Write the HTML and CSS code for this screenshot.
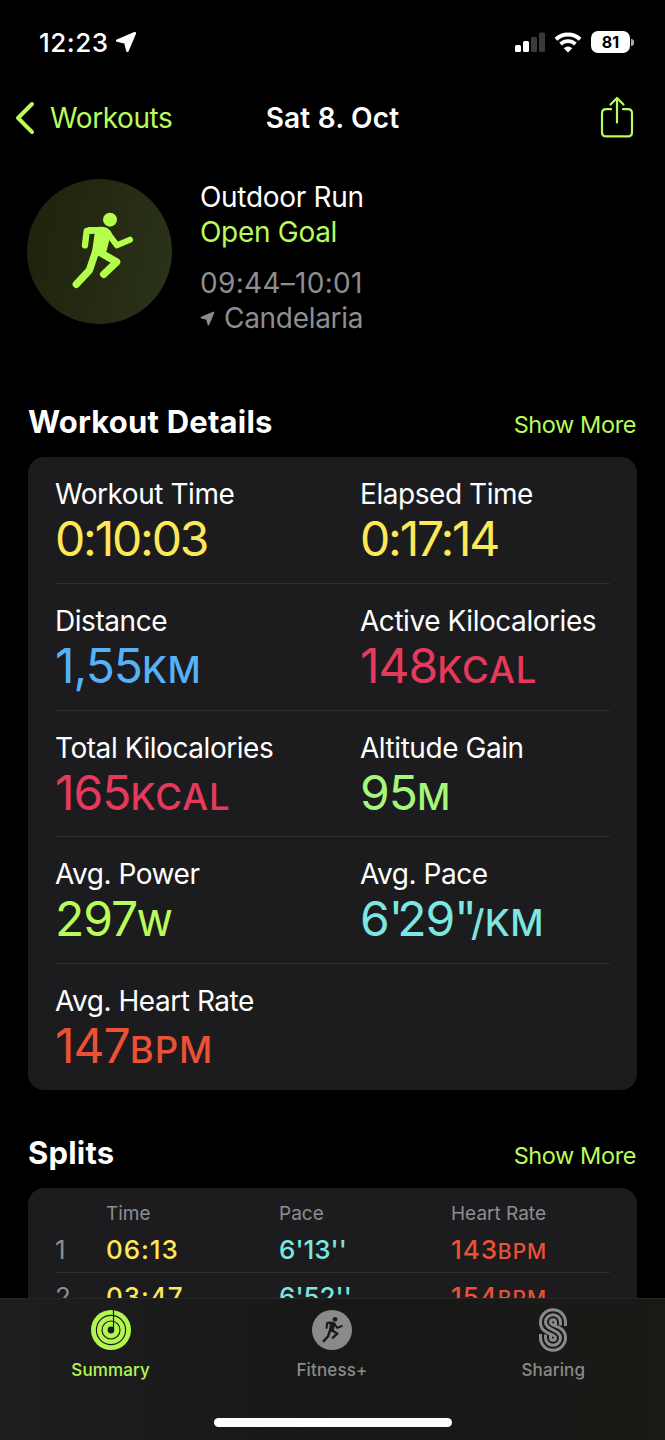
FILE: index.html
```html
<!DOCTYPE html>
<html lang="en">
<head>
    <meta charset="UTF-8">
    <meta name="viewport" content="width=device-width, initial-scale=1.0">
    <title>Workout - Sat 8. Oct</title>
    <link rel="stylesheet" href="styles.css">
</head>
<body>
    <!-- Shared shapes -->
    <svg class="defs" width="0" height="0">
        <symbol id="runner" viewBox="210 150 195 240">
            <circle cx="330" cy="179" r="21" fill="currentColor"/>
            <g fill="none" stroke="currentColor" stroke-linecap="round" stroke-linejoin="round">
                <path d="M255 256L260 213L305 210" stroke-width="19"/>
                <path d="M322 218L351 256L390 239" stroke-width="18"/>
                <path d="M288 272L268 331L229 373" stroke-width="22"/>
                <path d="M298 276L350 306L311 343" stroke-width="22"/>
            </g>
            <path d="M262 201H312Q328 203 336 221L328 240L320 272L312 286L280 290L276 277L284 220Z" fill="currentColor"/>
        </symbol>
        <symbol id="arrow" viewBox="0 0 22 22">
            <path d="M19.8 2.2L2.2 9.6L10.4 11.4L12.4 19.8Z" fill="currentColor" stroke="currentColor" stroke-width="2.6" stroke-linejoin="round"/>
        </symbol>
    </svg>

    <header class="status-bar">
        <div class="status-time">
            <span class="clock">12:23</span>
            <svg class="status-arrow"><use href="#arrow"/></svg>
        </div>
        <div class="status-icons">
            <svg class="signal" viewBox="0 0 30 20">
                <rect x="0" y="13" width="6" height="7" rx="1.5" fill="#fff"/>
                <rect x="8" y="9" width="6" height="11" rx="1.5" fill="#fff"/>
                <rect x="16" y="5" width="6" height="15" rx="1.5" fill="#3a3a3a"/>
                <rect x="24" y="0.5" width="6" height="19.5" rx="1.5" fill="#3a3a3a"/>
            </svg>
            <svg class="wifi" viewBox="0 0 28 21">
                <path d="M1.9 7.2A17.6 17.6 0 0 1 26.1 7.2" fill="none" stroke="#fff" stroke-width="4"/>
                <path d="M6.6 12A11 11 0 0 1 21.4 12" fill="none" stroke="#fff" stroke-width="3.8"/>
                <path d="M14 20.5L9.8 16.2A6.2 6.2 0 0 1 18.2 16.2Z" fill="#fff"/>
            </svg>
            <div class="battery">81</div>
        </div>
    </header>

    <nav class="nav-bar">
        <a class="back" href="#">
            <svg class="chevron" viewBox="0 0 20 34">
                <path d="M17 3L3 17L17 31" fill="none" stroke="currentColor" stroke-width="4" stroke-linecap="round" stroke-linejoin="round"/>
            </svg>
            <span>Workouts</span>
        </a>
        <h1>Sat 8. Oct</h1>
        <svg class="share" viewBox="0 0 34 42">
            <g fill="none" stroke="currentColor" stroke-width="2.2" stroke-linecap="round" stroke-linejoin="round">
                <path d="M11 13.2H6.2Q2 13.2 2 17.4V36.2Q2 40.4 6.2 40.4H27.8Q32 40.4 32 36.2V17.4Q32 13.2 27.8 13.2H23"/>
                <path d="M17 26.5V2M10.5 8.5L17 2L23.5 8.5"/>
            </g>
        </svg>
    </nav>

    <section class="workout">
        <div class="workout-icon"><svg class="runner"><use href="#runner"/></svg></div>
        <div class="workout-info">
            <div class="type">Outdoor Run</div>
            <div class="goal">Open Goal</div>
            <div class="hours">09:44–10:01</div>
            <div class="place"><svg class="place-arrow"><use href="#arrow"/></svg><span>Candelaria</span></div>
        </div>
    </section>

    <div class="section-head details-head">
        <h2>Workout Details</h2>
        <a href="#">Show More</a>
    </div>
    <section class="card details">
        <div class="row">
            <div class="metric yellow"><h3>Workout Time</h3><p class="time">0:10:03</p></div>
            <div class="metric yellow"><h3>Elapsed Time</h3><p class="time">0:17:14</p></div>
        </div>
        <div class="row">
            <div class="metric blue"><h3>Distance</h3><p>1,55<small>KM</small></p></div>
            <div class="metric pink"><h3>Active Kilocalories</h3><p>148<small class="kcal">KCAL</small></p></div>
        </div>
        <div class="row">
            <div class="metric pink"><h3>Total Kilocalories</h3><p>165<small class="kcal">KCAL</small></p></div>
            <div class="metric green"><h3>Altitude Gain</h3><p>95<small>M</small></p></div>
        </div>
        <div class="row">
            <div class="metric lime"><h3>Avg. Power</h3><p>297<small class="watt">W</small></p></div>
            <div class="metric teal"><h3>Avg. Pace</h3><p>6<span class="mark">'</span>29<span class="mark">''</span><small>/KM</small></p></div>
        </div>
        <div class="row">
            <div class="metric orange"><h3>Avg. Heart Rate</h3><p>147<small class="bpm">BPM</small></p></div>
        </div>
    </section>

    <div class="section-head splits-head">
        <h2>Splits</h2>
        <a href="#">Show More</a>
    </div>
    <section class="card splits">
        <div class="split split-labels">
            <span></span><span>Time</span><span>Pace</span><span>Heart Rate</span>
        </div>
        <div class="split">
            <span class="num">1</span>
            <span class="split-time yellow">06:13</span>
            <span class="teal">6'13''</span>
            <span class="split-rate orange">143<small>BPM</small></span>
        </div>
        <div class="split">
            <span class="num">2</span>
            <span class="split-time yellow">03:47</span>
            <span class="teal">6'52''</span>
            <span class="split-rate orange">154<small>BPM</small></span>
        </div>
    </section>

    <footer class="tab-bar">
        <div class="tabs">
            <a class="tab active" href="#">
                <svg viewBox="0 0 44 44">
                    <circle cx="22" cy="22" r="20" fill="currentColor"/>
                    <g fill="none" stroke="#1c1e19" stroke-width="1.2">
                        <circle cx="22" cy="22" r="14.6"/>
                        <circle cx="22" cy="22" r="9"/>
                        <path d="M24.5 2V20"/>
                    </g>
                    <circle cx="22" cy="22" r="3.4" fill="#1c1e19"/>
                </svg>
                <span>Summary</span>
            </a>
            <a class="tab" href="#">
                <svg viewBox="0 0 44 44">
                    <circle cx="22" cy="22" r="20" fill="currentColor"/>
                    <use class="mini-runner" href="#runner" x="11.5" y="8" width="22" height="27"/>
                </svg>
                <span>Fitness+</span>
            </a>
            <a class="tab" href="#">
                <svg viewBox="-22 -22 44 44">
                    <g fill="none" stroke="currentColor" stroke-width="3">
                        <path d="M12.5 -4V-7.8A12.5 12.5 0 0 0 -12.5 -7.8C-12.5 5 2.5 3 2.5 7.8A2.5 2.5 0 0 1 -2.5 7.8V5"/>
                        <path d="M7.5 -4.5V-7.8A7.5 7.5 0 0 0 -7.5 -7.8C-7.5 0.5 7.5 -0.5 7.5 7.8A7.5 7.5 0 0 1 -7.5 7.8V4.500"/>
                        <path d="M2.5 -5V-7.8A2.5 2.5 0 0 0 -2.5 -7.8C-2.5 -3 12.5 -5 12.5 7.8A12.5 12.5 0 0 1 -12.5 7.8V4"/>
                    </g>
                </svg>
                <span>Sharing</span>
            </a>
        </div>
        <div class="home-indicator"></div>
    </footer>
</body>
</html>
```
FILE: styles.css
```css
* {
    box-sizing: border-box;
    margin: 0;
    padding: 0;
}
body {
    width: 665px;
    height: 1440px;
    overflow: hidden;
    background: #000;
    color: #fff;
    font-family: Inter, "Liberation Sans", sans-serif;
    font-size: 28px;
}
a {
    color: #b9fb59;
    text-decoration: none;
}
svg {
    display: block;
    flex: none;
}
.defs {
    position: absolute;
}

/* Status bar */
.status-bar {
    display: flex;
    justify-content: space-between;
    align-items: center;
    height: 84px;
    padding: 0 31px 0 39px;
}
.status-time, .status-icons {
    display: flex;
    align-items: center;
}
.clock {
    font-size: 26px;
    font-weight: 500;
    letter-spacing: 0.5px;
}
.status-arrow {
    width: 22px;
    height: 22px;
    margin-left: 6px;
}
.signal {
    width: 30px;
    height: 20px;
}
.wifi {
    width: 28px;
    height: 21px;
    margin: 0 9px;
}
.battery {
    position: relative;
    width: 39px;
    height: 22px;
    margin-right: 4px;
    border-radius: 7px;
    background: #fff;
    color: #000;
    font-size: 16px;
    font-weight: 700;
    line-height: 22px;
    text-align: center;
}
.battery::after {
    content: "";
    position: absolute;
    left: 40px;
    top: 8px;
    width: 3px;
    height: 7px;
    border-radius: 0 3px 3px 0;
    background: #aaa;
}

/* Navigation */
.nav-bar {
    display: grid;
    grid-template-columns: 1fr auto 1fr;
    align-items: center;
    height: 68px;
    padding: 0 31px 0 15px;
}
.back {
    display: flex;
    align-items: center;
    letter-spacing: -0.4px;
}
.chevron {
    width: 20px;
    height: 34px;
    margin-right: 15px;
}
.nav-bar h1 {
    padding-left: 16px;
    font-size: 28px;
    font-weight: 600;
    letter-spacing: 0.2px;
}
.share {
    width: 34px;
    height: 42px;
    margin-bottom: 3px;
    justify-self: end;
    color: #b9fb59;
}

/* Workout summary */
.workout {
    display: flex;
    height: 172px;
    padding: 27px 27px 0;
}
.workout-icon {
    display: flex;
    width: 145px;
    height: 145px;
    padding: 31px 0 0 43px;
    border-radius: 50%;
    background: linear-gradient(100deg, #1e220a, #2b331a);
    color: #b4fe4c;
}
.runner {
    width: 65px;
    height: 80px;
}
.workout-info {
    margin: 1px 0 0 28px;
    line-height: 35px;
    letter-spacing: -0.3px;
}
.goal {
    color: #b9fb59;
}
.hours {
    margin-top: 16px;
    letter-spacing: 0.3px;
}
.hours, .place {
    color: #8d8d92;
}
.place {
    display: flex;
    align-items: center;
}
.place-arrow {
    width: 15px;
    height: 15px;
    margin-right: 9px;
}

/* Sections */
.section-head {
    display: flex;
    justify-content: space-between;
    align-items: baseline;
    padding: 1px 29px 0 28px;
    line-height: 40px;
}
.section-head h2 {
    font-size: 31px;
    font-weight: 700;
    letter-spacing: 0.2px;
}
.section-head a {
    font-size: 23.5px;
    letter-spacing: -0.4px;
}
.details-head {
    margin-top: 77px;
    height: 56px;
}
.splits-head {
    margin-top: 42px;
    height: 56px;
}
.card {
    margin: 0 28px;
    padding: 0 27px;
    border-radius: 16px;
    background: #1c1c1e;
}
.details {
    height: 633px;
}
.row {
    display: grid;
    grid-template-columns: 305px 1fr;
    height: 126.75px;
    padding-top: 21px;
    border-bottom: 1px solid #2e2e30;
}
.row:last-child {
    border-bottom: none;
}
.metric h3 {
    font-size: 28px;
    font-weight: 400;
    line-height: 33px;
    letter-spacing: -0.45px;
    color: #fff;
}
.metric p {
    font-size: 48px;
    line-height: 55px;
    letter-spacing: -1px;
}
.metric .time {
    letter-spacing: -2.2px;
}
.metric .mark {
    letter-spacing: -6px;
}
.metric small {
    font-size: 36.5px;
    font-weight: 500;
    letter-spacing: 0.3px;
}
.metric .kcal, .metric .bpm {
    letter-spacing: 1px;
}
.metric .watt {
    font-size: 35px;
}
.yellow { color: #fde85a; }
.blue { color: #56b1f8; }
.pink { color: #e53a5c; }
.green { color: #a5f779; }
.lime { color: #b9fb59; }
.teal { color: #7de6e0; }
.orange { color: #ec5035; }

/* Splits */
.splits {
    height: 260px;
    padding-top: 11px;
}
.split {
    display: grid;
    grid-template-columns: 51px 173px 172px 1fr;
    height: 47px;
    border-bottom: 1px solid #2e2e30;
    font-size: 26px;
    font-weight: 500;
    line-height: 48px;
}
.split-time {
    letter-spacing: 0.9px;
}
.split-rate {
    letter-spacing: 0.9px;
}
.split small {
    font-size: 21px;
    letter-spacing: 1px;
}
.split .num {
    color: #8d8d92;
    font-weight: 400;
}
.split-labels {
    height: 27px;
    border: none;
    color: #8d8d92;
    font-size: 19px;
    font-weight: 400;
    line-height: 30px;
}

/* Tab bar */
.tab-bar {
    position: fixed;
    left: 0;
    bottom: 0;
    width: 665px;
    height: 142px;
    padding-top: 9px;
    border-top: 1px solid #262627;
    background: linear-gradient(90deg, #1e1e1e, #181818 45%, #191a16);
}
.tabs {
    display: flex;
    height: 111px;
    padding-right: 1px;
}
.tab {
    display: flex;
    flex: 1;
    flex-direction: column;
    align-items: center;
    color: #8a8a8a;
    font-size: 17px;
    font-weight: 500;
    letter-spacing: 0.15px;
}
.tab svg {
    width: 44px;
    height: 44px;
}
.tab span {
    margin-top: 7px;
    line-height: 22px;
}
.tab.active {
    color: #b4f650;
}
.mini-runner {
    color: #1b1b1b;
}
.home-indicator {
    width: 238px;
    height: 9px;
    margin: -1px auto 0;
    border-radius: 5px;
    background: #fff;
}
```
